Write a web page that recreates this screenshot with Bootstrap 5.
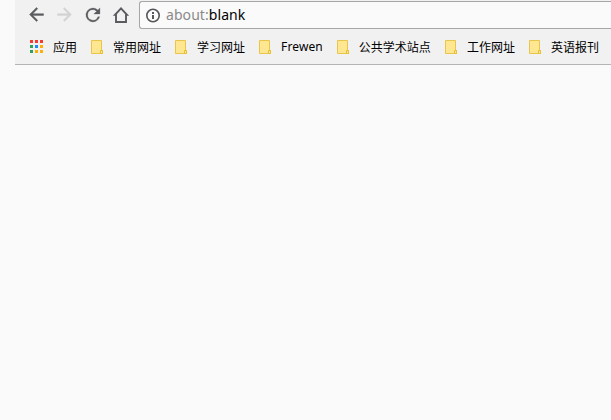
<!DOCTYPE html>
<html lang="zh-CN">
<head>
<meta charset="utf-8">
<meta name="viewport" content="width=device-width, initial-scale=1">
<title>about:blank</title>
<link href="https://cdn.jsdelivr.net/npm/bootstrap@5.3.0/dist/css/bootstrap.min.css" rel="stylesheet">
<style>
body{background:#fafafa;color:#000;font-family:"Noto Sans","Noto Sans CJK SC",sans-serif}
.chrome-top{margin-left:15px;height:65px;background:#f1f1f1;border-bottom:1px solid #b4b4b4}
.tool-row{height:29px;padding-left:11px}
.tool-btn{width:21px;height:21px;margin-right:7px;padding:0;border:0;background:none;color:#5a5b5f;line-height:0}
.tool-btn svg{width:21px;height:21px;fill:currentColor}
.tool-btn:disabled{color:#d3d3d3;opacity:1}
.address{height:28px;margin-left:1px;padding-left:6px;margin-top:1px;background:#fafafa;border:1px solid #a6a6a6;border-right:0;border-radius:3px 0 0 3px}
.address-text{font-size:14px;line-height:20px;margin-left:5px;letter-spacing:.07px;white-space:nowrap;color:#000}
.scheme{color:#8a8a8a}
.mark-row{height:35px;padding-left:15px}
.mark-item{height:14px;margin-right:14px;color:#000;font:12px/14px "Noto Sans","Noto Sans CJK SC",sans-serif;white-space:nowrap}
.mark-item svg{flex:none;margin-right:10px}
.mark-item.latin{letter-spacing:.12px}
.cjk{font-family:"Noto Sans CJK SC",sans-serif}
</style>
<script src="https://cdn.jsdelivr.net/npm/bootstrap@5.3.0/dist/js/bootstrap.bundle.min.js"></script>
</head>
<body class="overflow-hidden">
<svg width="0" height="0" class="position-absolute" aria-hidden="true">
<symbol id="folder" viewBox="0 0 12 14"><path d="M.5.5h10v10h1v3H.5z" fill="#ffe791" stroke="#e9c54a"/><path d="M9.5 13.5v-3h2v3z" fill="#ffe791" stroke="#e9bf35"/></symbol>
</svg>
<header class="chrome-top">
<div class="tool-row d-flex align-items-center">
<button class="tool-btn flex-shrink-0" aria-label="后退"><svg viewBox="0 0 24 24"><path d="M20 11H7.8l5.6-5.6L12 4l-8 8 8 8 1.4-1.4L7.8 13H20z" stroke="currentColor" stroke-width=".5"/></svg></button>
<button class="tool-btn flex-shrink-0" aria-label="前进" disabled><svg viewBox="0 0 24 24"><path d="M4 11h12.2l-5.6-5.6L12 4l8 8-8 8-1.4-1.4 5.6-5.6H4z" stroke="currentColor" stroke-width=".5"/></svg></button>
<button class="tool-btn flex-shrink-0" aria-label="重新加载"><svg viewBox="-.5 -.5 24 24"><path d="M17.65 6.35A8 8 0 1 0 19.73 14h-2.08A6 6 0 1 1 12 6c1.66 0 3.14.69 4.22 1.78L13 11h7V4z" stroke="currentColor" stroke-width=".3"/></svg></button>
<button class="tool-btn flex-shrink-0" aria-label="主页"><svg viewBox="0 0 21 21"><path d="M11 4.3 5 10.8h1V18h10v-7.2h1z" fill="none" stroke="currentColor" stroke-width="1.9"/></svg></button>
<div class="address d-flex align-items-center flex-grow-1">
<svg width="15" height="15" viewBox="0 0 15 15" class="flex-shrink-0"><circle cx="7" cy="7.5" r="6.2" fill="none" stroke="#55565a" stroke-width="1.6"/><path d="M6 4h2v2H6zM6 7h2v4H6z" fill="#55565a"/></svg>
<span class="address-text"><span class="scheme">about:</span>blank</span>
</div>
</div>
<nav class="mark-row d-flex align-items-center">
<a class="mark-item cjk d-flex align-items-center text-decoration-none" href="#"><svg width="13" height="13" viewBox="0 0 13 13" shape-rendering="crispEdges"><path d="M0 0h3v3H0zM5 0h3v3H5zM10 0h3v3h-3z" fill="#f33b32"/><path d="M0 5h3v3H0zM0 10h3v3H0z" fill="#30a05a"/><path d="M5 5h3v3H5z" fill="#1e88f5"/><path d="M10 5h3v3h-3zM10 10h3v3h-3zM5 10h3v3H5z" fill="#fbaf08"/></svg>应用</a>
<a class="mark-item cjk d-flex align-items-center text-decoration-none" href="#"><svg width="12" height="14"><use href="#folder"/></svg>常用网址</a>
<a class="mark-item cjk d-flex align-items-center text-decoration-none" href="#"><svg width="12" height="14"><use href="#folder"/></svg>学习网址</a>
<a class="mark-item latin d-flex align-items-center text-decoration-none" href="#"><svg width="12" height="14"><use href="#folder"/></svg>Frewen</a>
<a class="mark-item cjk d-flex align-items-center text-decoration-none" href="#"><svg width="12" height="14"><use href="#folder"/></svg>公共学术站点</a>
<a class="mark-item cjk d-flex align-items-center text-decoration-none" href="#"><svg width="12" height="14"><use href="#folder"/></svg>工作网址</a>
<a class="mark-item cjk d-flex align-items-center text-decoration-none" href="#"><svg width="12" height="14"><use href="#folder"/></svg>英语报刊</a>
</nav>
</header>
</body>
</html>
